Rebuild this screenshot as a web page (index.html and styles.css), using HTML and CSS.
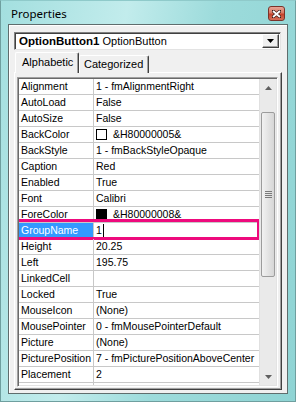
FILE: index.html
```html
<!DOCTYPE html>
<html>
<head>
<meta charset="utf-8">
<link rel="stylesheet" href="styles.css">
</head>
<body>
<div class="window">
  <div class="titlebar">
    <span class="title">Properties</span>
    <div class="close">
      <svg width="9" height="8" viewBox="0 0 9 8"><path d="M1 1 L8 7 M8 1 L1 7" stroke="#3a1a14" stroke-width="3.2" stroke-linecap="square"/><path d="M1 1 L8 7 M8 1 L1 7" stroke="#fff" stroke-width="1.8"/></svg>
    </div>
  </div>
  <div class="client">
    <div class="combo">
      <span class="combo-text"><b>OptionButton1</b> OptionButton</span>
      <div class="ddbtn"><svg width="7" height="4" viewBox="0 0 7 4"><path d="M0 0 H7 L3.5 4 Z" fill="#000"/></svg></div>
    </div>
    <div class="tabs">
      <div class="tab active">Alphabetic</div>
      <div class="tab">Categorized</div>
    </div>
    <div class="panel">
      <div class="grid">
        <div class="rows">
          <div class="row"><div class="name">Alignment</div><div class="val">1 - fmAlignmentRight</div></div>
          <div class="row"><div class="name">AutoLoad</div><div class="val">False</div></div>
          <div class="row"><div class="name">AutoSize</div><div class="val">False</div></div>
          <div class="row"><div class="name">BackColor</div><div class="val"><span class="swatch white"></span>&amp;H80000005&amp;</div></div>
          <div class="row"><div class="name">BackStyle</div><div class="val">1 - fmBackStyleOpaque</div></div>
          <div class="row"><div class="name">Caption</div><div class="val">Red</div></div>
          <div class="row"><div class="name">Enabled</div><div class="val">True</div></div>
          <div class="row"><div class="name">Font</div><div class="val">Calibri</div></div>
          <div class="row"><div class="name">ForeColor</div><div class="val"><span class="swatch black"></span>&amp;H80000008&amp;</div></div>
          <div class="row selected"><div class="name">GroupName</div><div class="val">1<span class="caret"></span></div><div class="highlight"></div></div>
          <div class="row"><div class="name">Height</div><div class="val">20.25</div></div>
          <div class="row"><div class="name">Left</div><div class="val">195.75</div></div>
          <div class="row"><div class="name">LinkedCell</div><div class="val"></div></div>
          <div class="row"><div class="name">Locked</div><div class="val">True</div></div>
          <div class="row"><div class="name">MouseIcon</div><div class="val">(None)</div></div>
          <div class="row"><div class="name">MousePointer</div><div class="val">0 - fmMousePointerDefault</div></div>
          <div class="row"><div class="name">Picture</div><div class="val">(None)</div></div>
          <div class="row"><div class="name">PicturePosition</div><div class="val">7 - fmPicturePositionAboveCenter</div></div>
          <div class="row"><div class="name">Placement</div><div class="val">2</div></div>
          <div class="row"><div class="name">PrintObject</div><div class="val">True</div></div>
        </div>
        <div class="vscroll">
          <div class="sbtn"><svg width="7" height="4" viewBox="0 0 7 4"><path d="M0 4 H7 L3.5 0 Z" fill="#606060"/></svg></div>
          <div class="track">
            <div class="thumb"><div class="grip"></div><div class="grip"></div><div class="grip"></div><div class="grip"></div></div>
          </div>
          <div class="sbtn"><svg width="7" height="4" viewBox="0 0 7 4"><path d="M0 0 H7 L3.5 4 Z" fill="#606060"/></svg></div>
        </div>
      </div>
    </div>
  </div>
</div>
</body>
</html>
```
FILE: styles.css
```css
* { box-sizing: border-box; }
html, body { margin: 0; padding: 0; }
body { width: 296px; height: 402px; overflow: hidden; background: #9fdcdc; }

.window {
  width: 296px;
  height: 402px;
  display: flex;
  flex-direction: column;
  padding: 0 7px 7px 7px;
  background: linear-gradient(100deg, #a3dfdf 0%, #c2ecec 35%, #9cdbdb 60%, #8fd4d4 100%);
  border: 1px solid #6f9f9f;
  border-top-color: #8fcaca;
}

.titlebar {
  height: 23px;
  flex: none;
  display: flex;
  align-items: center;
  justify-content: space-between;
  padding-left: 3px;
}
.title {
  font-family: "Noto Sans", sans-serif;
  font-size: 11.5px;
  color: #000;
  margin-top: 2px;
}
.close {
  width: 17px;
  height: 15px;
  margin-right: 3px;
  margin-top: 2px;
  border: 1px solid #7a332a;
  border-radius: 3px;
  background: linear-gradient(#e8a596 0%, #d77a66 45%, #c4432c 55%, #d5705a 100%);
  display: flex;
  align-items: center;
  justify-content: center;
}

.client {
  flex: 1;
  min-height: 0;
  display: flex;
  flex-direction: column;
  background: #f0f0f0;
  border: 1px solid #5f6d6d;
  padding: 7px 5px 3px 5px;
  box-shadow: inset 1px 1px 0 #ffffff;
}

.combo {
  height: 18px;
  flex: none;
  display: flex;
  align-items: center;
  justify-content: space-between;
  background: #fff;
  border: 1px solid #808080;
  border-right-color: #e3e3e3;
  border-bottom-color: #e3e3e3;
  box-shadow: inset 1px 1px 0 #404040;
  padding: 0 1px 0 4px;
  margin-right: 1px;
}
.combo-text {
  font-family: "Liberation Sans", sans-serif;
  font-size: 11px;
  color: #000;
  white-space: nowrap;
}
.combo-text b { font-size: 11.5px; }
.ddbtn {
  width: 17px;
  height: 14px;
  background: #f0f0f0;
  border: 1px solid #fff;
  border-right-color: #404040;
  border-bottom-color: #404040;
  box-shadow: inset -1px -1px 0 #a0a0a0;
  display: flex;
  align-items: center;
  justify-content: center;
}

.tabs {
  display: flex;
  align-items: flex-end;
  height: 23px;
  flex: none;
  padding-left: 1px;
  margin-bottom: -1px;
  position: relative;
  z-index: 1;
}
.tab {
  font-family: "Liberation Sans", sans-serif;
  font-size: 11px;
  color: #000;
  height: 18px;
  padding: 2px 5px 0 4px;
  border: 1px solid #fff;
  border-bottom: none;
  border-right: 1px solid #404040;
  box-shadow: inset -1px 0 0 #a0a0a0;
  background: #f0f0f0;
  border-top-left-radius: 2px;
  border-top-right-radius: 2px;
}
.tab.active {
  height: 21px;
  padding: 3px 6px 0 6px;
  width: 64px;
}

.panel {
  flex: 1;
  min-height: 0;
  display: flex;
  border: 1px solid #fff;
  border-right-color: #404040;
  border-bottom-color: #404040;
  box-shadow: inset -1px -1px 0 #a0a0a0;
  padding: 4px 3px 2px 2px;
}

.grid {
  flex: 1;
  display: flex;
  border: 1px solid #a0a0a0;
  border-right-color: #fff;
  border-bottom-color: #fff;
  box-shadow: inset 1px 1px 0 #696969, inset -1px -1px 0 #e3e3e3;
  padding: 1px;
  background: #fff;
  overflow: hidden;
  min-height: 0;
}

.rows {
  flex: 1;
  overflow: hidden;
  font-family: "Liberation Sans", sans-serif;
  font-size: 10.5px;
  color: #000;
}
.row {
  display: flex;
  height: 16px;
  border-bottom: 1px solid #c8c8c8;
  position: relative;
}
.name {
  width: 75px;
  flex: none;
  padding-left: 2px;
  line-height: 15px;
  border-right: 1px solid #c8c8c8;
  white-space: nowrap;
  overflow: hidden;
}
.val {
  flex: 1;
  padding-left: 2px;
  line-height: 15px;
  white-space: nowrap;
  overflow: hidden;
  display: flex;
  align-items: center;
}
.row.selected .name { background: #3399ff; color: #fff; }
.caret {
  display: inline-block;
  width: 1px;
  height: 13px;
  background: #000;
  margin-left: 1px;
}
.swatch {
  display: inline-block;
  width: 11px;
  height: 11px;
  border: 1px solid #000;
  margin-right: 6px;
}
.swatch.white { background: #fff; }
.swatch.black { background: #000; }

.highlight {
  position: absolute;
  left: -3px;
  right: -1px;
  top: -4px;
  bottom: -2px;
  border: 3px solid #ee0a7d;
  pointer-events: none;
}

.vscroll {
  width: 17px;
  flex: none;
  display: flex;
  flex-direction: column;
  background: #eaeaea;
  border-left: 1px solid #e0e0e0;
}
.sbtn {
  height: 17px;
  flex: none;
  display: flex;
  align-items: center;
  justify-content: center;
}
.track {
  flex: 1;
  padding: 16px 1px 91px 1px;
  display: flex;
}
.thumb {
  flex: 1;
  border: 1px solid #9c9c9c;
  border-radius: 2px;
  background: linear-gradient(90deg, #f2f2f2, #e4e4e4 50%, #d6d6d6);
  display: flex;
  flex-direction: column;
  align-items: center;
  justify-content: center;
  gap: 1px;
}
.grip {
  width: 7px;
  height: 1px;
  background: #7a7a7a;
}
```
